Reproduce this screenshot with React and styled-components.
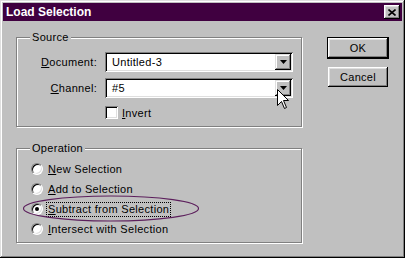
import styled, { createGlobalStyle } from 'styled-components';

const Global = createGlobalStyle`
  html, body { margin: 0; padding: 0; background: #c0c0c0; }
  body { font-family: "Liberation Sans", Arial, sans-serif; font-size: 11px; letter-spacing: 0.3px; color: #000; }
`;

const Window = styled.div`
  position: relative;
  box-sizing: border-box;
  width: 405px;
  height: 258px;
  padding: 3px;
  background: #c0c0c0;
  box-shadow: inset -1px -1px #000, inset 1px 1px #dfdfdf,
    inset -2px -2px #808080, inset 2px 2px #fff;
  overflow: hidden;
`;

const TitleBar = styled.div`
  display: flex;
  align-items: center;
  justify-content: space-between;
  height: 18px;
  padding: 0 2px 0 3px;
  background: #400040;
  color: #fff;
  font-weight: bold;
  font-size: 12px;
  letter-spacing: 0;
`;

const CloseButton = styled.div`
  width: 16px;
  height: 14px;
  display: flex;
  align-items: center;
  justify-content: center;
  background: #c0c0c0;
  box-shadow: inset -1px -1px #000, inset 1px 1px #fff, inset -2px -2px #808080,
    inset 2px 2px #dfdfdf;
`;

const Body = styled.div`
  display: flex;
  padding: 16px 0 0 13px;
`;

const LeftColumn = styled.div`
  width: 286px;
  display: flex;
  flex-direction: column;
`;

const ButtonColumn = styled.div`
  display: flex;
  flex-direction: column;
  margin-left: 26px;
  padding-top: 1px;
`;

const PushButton = styled.div`
  box-sizing: border-box;
  width: 60px;
  height: 20px;
  display: flex;
  align-items: center;
  justify-content: center;
  margin-top: ${({ $gap }) => $gap || 0}px;
  background: #c0c0c0;
  box-shadow: inset -1px -1px #000, inset 1px 1px #fff, inset -2px -2px #808080,
    inset 2px 2px #dfdfdf;
  outline: ${({ $default }) => ($default ? '1px solid #000' : 'none')};
`;

const GroupBox = styled.div`
  box-sizing: border-box;
  border: 1px solid #808080;
  box-shadow: inset 1px 1px #fff, 1px 1px #fff;
  margin-top: ${({ $top }) => $top || 0}px;
  padding-bottom: ${({ $bottom }) => $bottom || 0}px;
`;

const Legend = styled.div`
  display: table;
  margin: -7px 0 0 13px;
  padding: 0 2px;
  height: 13px;
  line-height: 13px;
  background: #c0c0c0;
`;

const FieldGrid = styled.div`
  display: grid;
  grid-template-columns: 80px 188px;
  column-gap: 8px;
  row-gap: 6px;
  margin-top: 8px;
  align-items: center;
`;

const FieldLabel = styled.div`
  text-align: right;
`;

const Combo = styled.div`
  box-sizing: border-box;
  height: 20px;
  display: flex;
  align-items: center;
  padding: 2px 2px 2px 7px;
  background: #fff;
  box-shadow: inset 1px 1px #808080, inset -1px -1px #fff, inset 2px 2px #000,
    inset -2px -2px #dfdfdf;
`;

const ComboText = styled.div`
  flex: 1;
`;

const ComboArrow = styled.div`
  width: 16px;
  height: 16px;
  display: flex;
  align-items: center;
  justify-content: center;
  background: #c0c0c0;
  box-shadow: inset -1px -1px #000, inset 1px 1px #dfdfdf, inset -2px -2px #808080,
    inset 2px 2px #fff;
`;

const CheckRow = styled.div`
  grid-column: 2;
  display: flex;
  align-items: center;
  gap: 4px;
  margin-top: 2px;
  height: 13px;
`;

const CheckBox = styled.div`
  width: 13px;
  height: 13px;
  box-sizing: border-box;
  background: #fff;
  box-shadow: inset 1px 1px #808080, inset -1px -1px #fff, inset 2px 2px #000,
    inset -2px -2px #dfdfdf;
`;

const RadioList = styled.div`
  display: flex;
  flex-direction: column;
  margin-top: 4px;
  padding-left: 14px;
`;

const RadioRow = styled.div`
  height: 20px;
  display: flex;
  align-items: center;
  gap: 4px;
`;

const Radio = styled.div`
  box-sizing: border-box;
  width: 12px;
  height: 12px;
  border-radius: 50%;
  background: #fff;
  border: 1px solid;
  border-color: #808080 #fff #fff #808080;
  box-shadow: inset 1px 1px #000, inset -1px -1px #dfdfdf;
  display: flex;
  align-items: center;
  justify-content: center;

  &::after {
    content: '';
    display: ${({ $checked }) => ($checked ? 'block' : 'none')};
    width: 4px;
    height: 4px;
    border-radius: 50%;
    background: #000;
  }
`;

const RadioLabel = styled.span`
  padding: 0 1px;
  line-height: 13px;
  outline: ${({ $focus }) => ($focus ? '1px dotted #000' : 'none')};
  outline-offset: 0;
`;

const Annotation = styled.svg`
  position: absolute;
  left: 22px;
  top: 195px;
  pointer-events: none;
`;

const Cursor = styled.svg`
  position: absolute;
  left: 277px;
  top: 89px;
  pointer-events: none;
`;

function DownArrow() {
  return (
    <svg width="7" height="4" viewBox="0 0 7 4">
      <polygon points="0,0 7,0 3.5,4" fill="#000" />
    </svg>
  );
}

const operations = [
  { key: 'N', rest: 'ew Selection' },
  { key: 'A', rest: 'dd to Selection' },
  { key: 'S', rest: 'ubtract from Selection', checked: true },
  { key: 'I', rest: 'ntersect with Selection' },
];

export default function App() {
  return (
    <>
      <Global />
      <Window>
        <TitleBar>
          <span>Load Selection</span>
          <CloseButton>
            <svg width="8" height="7" viewBox="0 0 8 7">
              <path d="M0.5 0.5 L7.5 6.5 M7.5 0.5 L0.5 6.5" stroke="#000" strokeWidth="1.6" />
            </svg>
          </CloseButton>
        </TitleBar>
        <Body>
          <LeftColumn>
            <GroupBox $bottom={7}>
              <Legend>Source</Legend>
              <FieldGrid>
                <FieldLabel>
                  <u>D</u>ocument:
                </FieldLabel>
                <Combo>
                  <ComboText>Untitled-3</ComboText>
                  <ComboArrow>
                    <DownArrow />
                  </ComboArrow>
                </Combo>
                <FieldLabel>
                  <u>C</u>hannel:
                </FieldLabel>
                <Combo>
                  <ComboText>#5</ComboText>
                  <ComboArrow>
                    <DownArrow />
                  </ComboArrow>
                </Combo>
                <CheckRow>
                  <CheckBox />
                  <span>
                    <u>I</u>nvert
                  </span>
                </CheckRow>
              </FieldGrid>
            </GroupBox>
            <GroupBox $top={21} $bottom={3}>
              <Legend>Operation</Legend>
              <RadioList>
                {operations.map((op) => (
                  <RadioRow key={op.key}>
                    <Radio $checked={op.checked} />
                    <RadioLabel $focus={op.checked}>
                      <u>{op.key}</u>
                      {op.rest}
                    </RadioLabel>
                  </RadioRow>
                ))}
              </RadioList>
            </GroupBox>
          </LeftColumn>
          <ButtonColumn>
            <PushButton $default>OK</PushButton>
            <PushButton $gap={9}>Cancel</PushButton>
          </ButtonColumn>
        </Body>
        <Annotation width="178" height="28" viewBox="0 0 178 28">
          <ellipse cx="89" cy="13.5" rx="87.5" ry="12.5" fill="none" stroke="#5c1f5c" strokeWidth="1.2" />
        </Annotation>
        <Cursor width="13" height="21" viewBox="0 0 13 21">
          <path
            d="M0.5 0.5 L0.5 16.5 L4.5 12.5 L7.5 19.5 L9.5 18.5 L6.5 11.5 L11.5 11.5 Z"
            fill="#fff"
            stroke="#000"
            strokeWidth="1"
          />
        </Cursor>
      </Window>
    </>
  );
}
